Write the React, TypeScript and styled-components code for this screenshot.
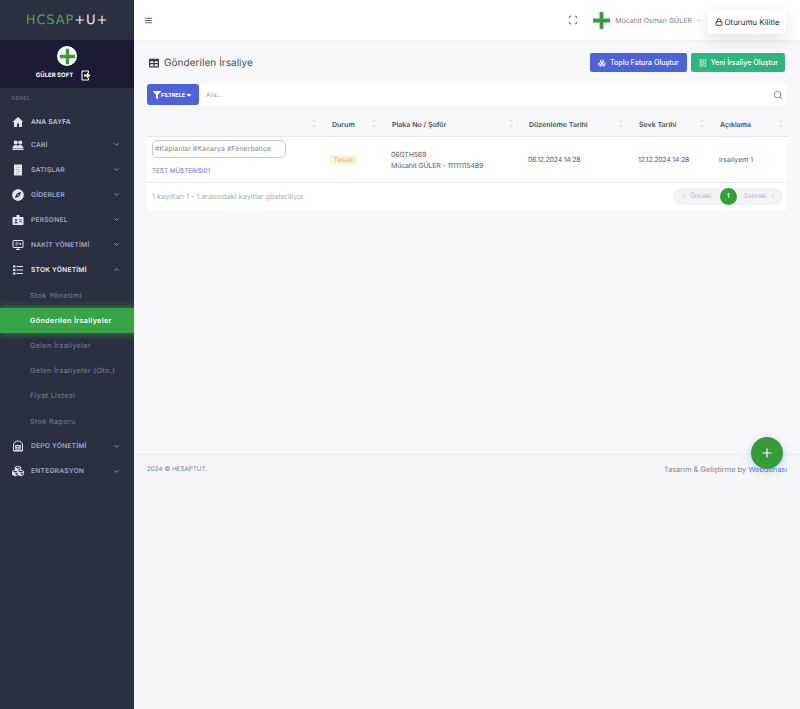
import React from 'react';
import styled, { createGlobalStyle } from 'styled-components';
import { FaHome, FaCompass, FaCubes, FaFilter, FaCaretDown, FaTable } from 'react-icons/fa';
import { LuChevronDown, LuChevronUp, LuChevronLeft, LuChevronRight, LuSearch, LuLock, LuMenu, LuScan, LuPlus, LuBoxes, LuReceiptText } from 'react-icons/lu';

const Global = createGlobalStyle`
  html, body { margin: 0; padding: 0; background: #f8f8fb; }
  * { box-sizing: border-box; }
  body { font-family: Inter, "Liberation Sans", sans-serif; color: #495057; text-rendering: geometricPrecision; }
`;

const Page = styled.div`
  display: flex; width: 800px; height: 709px; overflow: hidden; position: relative;
`;
const Sidebar = styled.aside`
  width: 134px; flex: none; background: #2a3042; display: flex; flex-direction: column; overflow: hidden;
`;
const Brand = styled.div`
  height: 40px; display: flex; align-items: center; justify-content: center;
  font-family: "DejaVu Sans", sans-serif; font-size: 13px; letter-spacing: 0.9px; font-weight: 400; white-space: nowrap;
`;
const BrandGreen = styled.span`color: #4f9f50;`;
const BrandWhite = styled.span`color: #e6e8ec;`;
const Company = styled.div`
  height: 48px; background: #1c1b33; display: flex; flex-direction: column; align-items: center; padding-top: 6px;
`;
const Avatar = styled.div`
  width: 20px; height: 20px; border-radius: 50%; background: #fff; display: flex; align-items: center; justify-content: center;
`;
const CompanyRow = styled.div`
  display: flex; align-items: center; gap: 8px; margin: 4px 7px 0 0; color: #fff; font-size: 6px; font-weight: 700;
`;
const SectionTitle = styled.div`
  font-size: 5.5px; color: #6a7187; letter-spacing: .3px; padding: 8px 0 0 11px; height: 23px; line-height: 7px;
`;
const MenuList = styled.nav`
  display: flex; flex-direction: column;
`;
const MenuItem = styled.div<{ $short?: boolean; $tone?: string }>`
  height: ${p => p.$short ? 21 : 25}px; display: flex; align-items: center; padding: 0 14px 0 12px;
  color: ${p => p.$tone ?? '#a0a9c6'}; font-size: 6.7px; font-weight: 600; letter-spacing: .2px;
  & > svg:first-child { width: 12px; height: 12px; margin-right: 7px; flex: none; color: #e4e7f0; }
`;
const MenuLabel = styled.span`flex: 1; white-space: nowrap;`;
const Chevron = styled.span`
  display: flex; color: #a6b0cf; & svg { width: 7px; height: 7px; stroke-width: 3; }
`;
const SubList = styled.div`
  display: flex; flex-direction: column; margin-top: 1px;
`;
const SubItem = styled.div<{ $active?: boolean }>`
  height: 25.1px; display: flex; align-items: center; padding-left: 30px; font-size: 7.2px; letter-spacing: .35px; white-space: nowrap;
  font-weight: ${p => p.$active ? 600 : 500};
  color: ${p => p.$active ? '#fff' : '#6f7690'};
  background: ${p => p.$active ? '#38a347' : 'transparent'};
  box-shadow: ${p => p.$active ? '0 0 7px 1px rgba(52,160,70,.75)' : 'none'};
`;
const Main = styled.main`
  flex: 1; min-width: 0; display: flex; flex-direction: column;
`;
const Topbar = styled.header`
  height: 40px; background: #fff; display: flex; align-items: center; padding: 0 14px 0 10px; flex: none; box-shadow: 0 1px 3px rgba(18,38,63,.04);
  position: relative;
`;
const MenuBtn = styled.span`display: flex; color: #555b6d; & svg { width: 9px; height: 9px; stroke-width: 2.5; }`;
const Spacer = styled.div`flex: 1;`;
const Full = styled.span`display: flex; color: #555b6d; margin-right: 14px; & svg { width: 10px; height: 10px; stroke-width: 2.2; }`;
const UserName = styled.span`
  display: flex; align-items: center; gap: 4px; font-size: 7px; color: #7a7f8e; margin: 0 85px 0 4px; white-space: nowrap;
  & svg { width: 5px; height: 5px; }
`;
const LockMenu = styled.div`
  position: absolute; top: 9px; left: 574px; width: 78px; height: 25px; background: #fff; border-radius: 3px;
  box-shadow: 0 6px 18px rgba(30,32,37,.13); display: flex; align-items: center; justify-content: center; gap: 2px; padding-top: 1px;
  font-size: 7.9px; font-weight: 400; color: #212529; white-space: nowrap;
  & svg { width: 8px; height: 8px; stroke-width: 2.5; }
`;
const Content = styled.section`
  height: 414px; flex: none; padding: 13px 13px 0 13px; display: flex; flex-direction: column;
`;
const TitleRow = styled.div`
  display: flex; align-items: center; height: 19px; padding-right: 2px;
`;
const Title = styled.h1`
  margin: 0; flex: 1; display: flex; align-items: center; gap: 5px; font-size: 10.1px; font-weight: 400; color: #495057;
  & svg { width: 10px; height: 10px; color: #343a40; margin-left: 2px; }
`;
const ActionBtn = styled.button<{ $bg: string }>`
  height: 19px; border: 0; border-radius: 2px; background: ${p => p.$bg}; color: #fff; font: 500 7.1px Inter, sans-serif;
  display: flex; align-items: center; gap: 4px; padding: 0 7px 0 8px; margin-left: 4px; white-space: nowrap;
  & svg { width: 8px; height: 8px; }
`;
const BulkBtn = styled(ActionBtn)`
  padding-right: 8px;
`;
const SearchBar = styled.div`
  margin-top: 12px; height: 21px; background: #fff; display: flex; align-items: center; border-radius: 3px;
`;
const FilterBtn = styled.button`
  width: 52px; height: 21px; border: 0; border-radius: 3px; background: #4e63d9; color: #fff; display: flex; align-items: center; justify-content: center;
  font: 700 5.4px Inter, sans-serif; padding: 0; gap: 0;
  & svg { width: 8px; height: 8px; }
`;
const SearchInput = styled.span`
  flex: 1; padding-left: 7px; font-size: 6.5px; color: #9aa0ad;
`;
const SearchIcon = styled.span`display: flex; color: #74788d; margin-right: 4px; & svg { width: 10px; height: 10px; }`;
const Card = styled.div`
  margin-top: 1px; background: #fff;
`;
const Table = styled.table`
  width: 640px; border-collapse: collapse; table-layout: fixed; font-size: 7px; color: #495057;
`;
const Th = styled.th<{ $w: number }>`
  width: ${p => p.$w}px; height: 30px; background: #f8f8fb; border-bottom: 1px solid #e6e8ee; text-align: left; padding: 8px 0 0 12px;
  font-size: 7px; font-weight: 600; color: #495057; position: relative; white-space: nowrap;
`;
const Sort = styled.span`
  position: absolute; right: 4px; top: 13px; width: 5px; display: flex; flex-direction: column; gap: 3px;
`;
const SortUp = styled.i`width: 0; height: 0; border: 2px solid transparent; border-top: 0; border-bottom: 3px solid #e4e6eb; margin-left: .5px;`;
const SortDown = styled.i`width: 0; height: 0; border: 2px solid transparent; border-bottom: 0; border-top: 3px solid #e4e6eb; margin-left: .5px;`;
const Td = styled.td`
  height: 46px; padding: 0 0 0 11px; border-bottom: 1px solid #e9ebf0; font-size: 7px; color: #5b6170; line-height: 11px; white-space: nowrap; vertical-align: middle;
`;
const NumTd = styled(Td)`
  letter-spacing: -0.25px;
`;
const DriverTd = styled(Td)`
  padding-top: 1px; letter-spacing: -0.15px;
`;
const TagTd = styled(Td)`
  padding: 3px 0 0 0; vertical-align: top;
`;
const BadgeTd = styled(Td)`
  padding-left: 10px;
`;
const TagInput = styled.div`
  width: 134px; height: 18px; margin: 0 0 0 5px; border: 1px solid #c4c8d0; border-radius: 5px; font-size: 6.9px; color: #858996; display: flex; align-items: center; padding-left: 2px; letter-spacing: .1px;
`;
const Customer = styled.div`
  margin: 9px 0 0 5px; color: #5f70d4; font-size: 6.3px; line-height: 9px;
`;
const Badge = styled.span`
  display: inline-block; height: 10px; line-height: 10px; padding: 0 3.5px; font-size: 6.4px; font-weight: 500; color: #efc07a; background: #fdf1dc; border-radius: 2px;
`;
const TableFooter = styled.div`
  height: 27px; display: flex; align-items: center; justify-content: space-between; padding: 0 4px 0 5px; font-size: 7.3px; color: #a8acb7;
`;
const Pager = styled.div`
  display: flex; align-items: center; height: 17px; background: #f3f3f7; border-radius: 9px; font-size: 6.4px; color: #b0b4bf;
`;
const PagerLink = styled.span`
  display: flex; align-items: center; gap: 3px; width: 46.5px; justify-content: center; & svg { width: 6px; height: 6px; }
`;
const PageNum = styled.span`
  width: 17px; height: 17px; border-radius: 50%; background: #34a038; color: #fff; display: flex; align-items: center; justify-content: center; font-weight: 600; font-size: 6.5px;
`;
const Footer = styled.footer`
  flex: 1; border-top: 1px solid #ececf1; padding: 10px 13px 0; display: flex; justify-content: space-between; color: #7d818f; background: #f6f6f9;
`;
const FooterLeft = styled.span`font-size: 6.3px; line-height: 9px;`;
const FooterRight = styled.span`font-size: 7.4px; line-height: 9px; white-space: nowrap;`;
const FooterLink = styled.span`color: #5b73e8;`;
const Fab = styled.button`
  position: absolute; left: 751px; top: 437px; width: 32px; height: 32px; border-radius: 50%; border: 0; background: #359a38; color: #fff; display: flex; align-items: center; justify-content: center;
  box-shadow: 0 2px 8px rgba(91,115,232,.35); padding: 0;
  & svg { width: 14px; height: 14px; }
`;

const GreenPlus = ({ size }: { size: number }) => (
  <svg width={size} height={size} viewBox="0 0 20 20"><path d="M8 1h4v7h7v4h-7v7H8v-7H1V8h7z" fill="#3a9c3c" /></svg>
);
const ExitIcon = () => (
  <svg width="10" height="11" viewBox="0 0 20 22" fill="none">
    <path d="M15 6V2H2v18h13v-4" stroke="#fff" strokeWidth="2" />
    <path d="M6 9h6V5l7 6-7 6v-4H6z" fill="#fff" />
  </svg>
);
const HomeIcon = () => (
  <svg viewBox="0 0 24 24" fill="currentColor"><path d="M12 2 1 12h3v10h6v-7h4v7h6V12h3z" /></svg>
);
const PeopleIcon = () => (
  <svg viewBox="0 0 24 24" fill="currentColor">
    <circle cx="7.5" cy="7" r="4" /><circle cx="16.5" cy="7" r="4" />
    <path d="M1 19c0-4 2.5-7 6.5-7 1.6 0 3 .5 4 1.400 1-.9 2.400-1.400 4.500-1.400 4 0 7 3 7 7z" />
    <rect x="1" y="20" width="22" height="2" />
  </svg>
);
const PageIcon = () => (
  <svg viewBox="0 0 24 24">
    <path d="M4 1h16v22H4z" fill="currentColor" />
    <path d="M7.500 7h9M7.500 11h9M7.500 15h9M7.500 19h6" stroke="#a9aebd" strokeWidth="1.200" />
  </svg>
);
const BadgeCardIcon = () => (
  <svg viewBox="0 0 24 24" fill="currentColor">
    <path d="M9 2h6v4h7a1 1 0 0 1 1 1v14a1 1 0 0 1-1 1H2a1 1 0 0 1-1-1V7a1 1 0 0 1 1-1h7z" />
    <circle cx="8" cy="12" r="2.200" fill="#2a3042" />
    <path d="M4.500 18.500c0-2 1.500-3 3.500-3s3.500 1 3.500 3zM14 11h6v1.500h-6zM14 15h6v1.500h-6z" fill="#2a3042" />
  </svg>
);
const MonitorIcon = () => (
  <svg viewBox="0 0 24 24" fill="none" stroke="currentColor" strokeWidth="2">
    <rect x="2" y="3" width="20" height="14" rx="1" />
    <path d="M8 21h8M12 17v4" />
    <path d="M7 8h6M7 12h4" strokeWidth="2" />
    <circle cx="16.500" cy="10" r="2" fill="currentColor" stroke="none" />
  </svg>
);
const ListIcon = () => (
  <svg viewBox="0 0 24 24" fill="currentColor">
    <rect x="2" y="3" width="5" height="4" /><rect x="2" y="10" width="5" height="4" /><rect x="2" y="17" width="5" height="4" />
    <rect x="9" y="4" width="13" height="2" /><rect x="9" y="11" width="13" height="2" /><rect x="9" y="18" width="13" height="2" />
  </svg>
);
const DepotIcon = () => (
  <svg viewBox="0 0 24 24" fill="none" stroke="currentColor" strokeWidth="2">
    <path d="M3 22V10a9 8 0 0 1 18 0v12z" />
    <rect x="7.500" y="11" width="9" height="7" />
    <path d="M7.500 14.500h9M5 21h14" />
  </svg>
);

const closed = <Chevron><LuChevronDown /></Chevron>;

const App = () => (
  <Page>
    <Global />
    <Sidebar>
      <Brand><BrandGreen>HCSAP</BrandGreen><BrandWhite>+U+</BrandWhite></Brand>
      <Company>
        <Avatar><GreenPlus size={17} /></Avatar>
        <CompanyRow>GÜLER SOFT <ExitIcon /></CompanyRow>
      </Company>
      <SectionTitle>GENEL</SectionTitle>
      <MenuList>
        <MenuItem $short $tone="#c5cbdd"><HomeIcon /><MenuLabel>ANA SAYFA</MenuLabel></MenuItem>
        <MenuItem><PeopleIcon /><MenuLabel>CARİ</MenuLabel>{closed}</MenuItem>
        <MenuItem><PageIcon /><MenuLabel>SATIŞLAR</MenuLabel>{closed}</MenuItem>
        <MenuItem><FaCompass /><MenuLabel>GİDERLER</MenuLabel>{closed}</MenuItem>
        <MenuItem><BadgeCardIcon /><MenuLabel>PERSONEL</MenuLabel>{closed}</MenuItem>
        <MenuItem><MonitorIcon /><MenuLabel>NAKİT YÖNETİMİ</MenuLabel>{closed}</MenuItem>
        <MenuItem $tone="#eef0f4"><ListIcon /><MenuLabel>STOK YÖNETİMİ</MenuLabel><Chevron><LuChevronUp /></Chevron></MenuItem>
        <SubList>
          <SubItem>Stok Yönetimi</SubItem>
          <SubItem $active>Gönderilen İrsaliyeler</SubItem>
          <SubItem>Gelen İrsaliyeler</SubItem>
          <SubItem>Gelen İrsaliyeler (Oto.)</SubItem>
          <SubItem>Fiyat Listesi</SubItem>
          <SubItem>Stok Raporu</SubItem>
        </SubList>
        <MenuItem><DepotIcon /><MenuLabel>DEPO YÖNETİMİ</MenuLabel>{closed}</MenuItem>
        <MenuItem><FaCubes /><MenuLabel>ENTEGRASYON</MenuLabel>{closed}</MenuItem>
      </MenuList>
    </Sidebar>
    <Main>
      <Topbar>
        <MenuBtn><LuMenu /></MenuBtn>
        <Spacer />
        <Full><LuScan /></Full>
        <GreenPlus size={19} />
        <UserName>Mücahit Osman GÜLER <LuChevronDown /></UserName>
        <LockMenu><LuLock /> Oturumu Kilitle</LockMenu>
      </Topbar>
      <Content>
        <TitleRow>
          <Title><FaTable /> Gönderilen İrsaliye</Title>
          <BulkBtn $bg="#4e63d9"><LuBoxes /> Toplu Fatura Oluştur</BulkBtn>
          <ActionBtn $bg="#2fb57f"><LuReceiptText /> Yeni İrsaliye Oluştur</ActionBtn>
        </TitleRow>
        <SearchBar>
          <FilterBtn><FaFilter />FILTRELE<FaCaretDown /></FilterBtn>
          <SearchInput>Ara...</SearchInput>
          <SearchIcon><LuSearch /></SearchIcon>
        </SearchBar>
        <Card>
          <Table>
            <thead>
              <tr>
                <Th $w={173}><Sort><SortUp /><SortDown /></Sort></Th>
                <Th $w={60}>Durum<Sort><SortUp /><SortDown /></Sort></Th>
                <Th $w={137}>Plaka No / Şoför<Sort><SortUp /><SortDown /></Sort></Th>
                <Th $w={110}>Düzenleme Tarihi<Sort><SortUp /><SortDown /></Sort></Th>
                <Th $w={81}>Sevk Tarihi<Sort><SortUp /><SortDown /></Sort></Th>
                <Th $w={79}>Açıklama<Sort><SortUp /><SortDown /></Sort></Th>
              </tr>
            </thead>
            <tbody>
              <tr>
                <TagTd>
                  <TagInput>#Kaplanlar #Kanarya #Fenerbahçe</TagInput>
                  <Customer>TEST MÜŞTERİSİ01</Customer>
                </TagTd>
                <BadgeTd><Badge>Taslak</Badge></BadgeTd>
                <DriverTd>06GTH569<br />Mücahit GÜLER - 11111115489</DriverTd>
                <NumTd>06.12.2024 14:28</NumTd>
                <NumTd>12.12.2024 14:28</NumTd>
                <Td>irsaliyem 1</Td>
              </tr>
            </tbody>
          </Table>
          <TableFooter>
            <span>1 kayıttan 1 - 1 arasındaki kayıtlar gösteriliyor</span>
            <Pager>
              <PagerLink><LuChevronLeft /> Önceki</PagerLink>
              <PageNum>1</PageNum>
              <PagerLink>Sonraki <LuChevronRight /></PagerLink>
            </Pager>
          </TableFooter>
        </Card>
      </Content>
      <Footer>
        <FooterLeft>2024 © HESAPTUT.</FooterLeft>
        <FooterRight>Tasarım &amp; Geliştirme by <FooterLink>Webdehası</FooterLink></FooterRight>
      </Footer>
    </Main>
    <Fab><LuPlus /></Fab>
  </Page>
);

export default App;
